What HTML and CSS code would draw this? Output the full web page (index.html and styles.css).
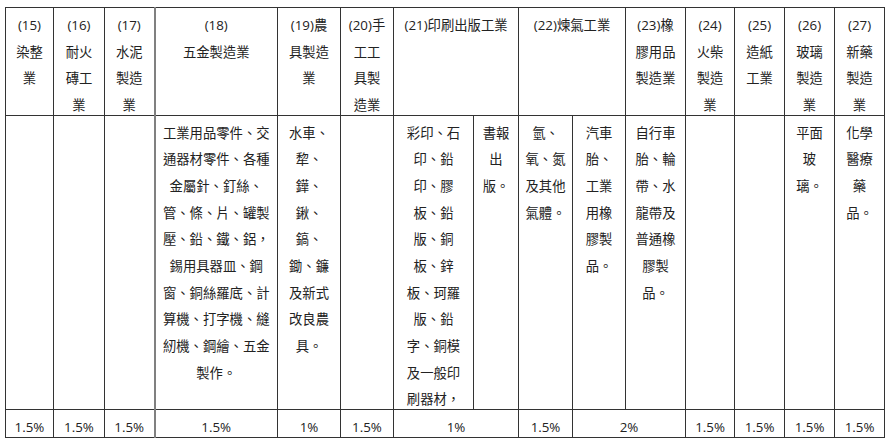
FILE: index.html
```html
<!DOCTYPE html>
<html lang="zh-Hant">
<head>
<meta charset="utf-8">
<link rel="stylesheet" href="styles.css">
</head>
<body>
<table class="rates">
  <colgroup>
    <col class="w48"><col class="w51"><col class="w50"><col class="w123"><col class="w63"><col class="w53"><col class="w80"><col class="w45"><col class="w54"><col class="w53"><col class="w60"><col class="w49"><col class="w50"><col class="w50"><col class="w50">
  </colgroup>
  <tr class="head">
    <td><div class="c">(15)<br>染整<br>業</div></td>
    <td><div class="c">(16)<br>耐火<br>磚工<br>業</div></td>
    <td><div class="c">(17)<br>水泥<br>製造<br>業</div></td>
    <td class="thick"><div class="c">(18)<br>五金製造業</div></td>
    <td><div class="c">(19)農<br>具製造<br>業</div></td>
    <td><div class="c">(20)手<br>工工<br>具製<br>造業</div></td>
    <td colspan="2"><div class="c">(21)印刷出版工業</div></td>
    <td colspan="2"><div class="c">(22)煉氣工業</div></td>
    <td><div class="c">(23)橡<br>膠用品<br>製造業</div></td>
    <td><div class="c">(24)<br>火柴<br>製造<br>業</div></td>
    <td><div class="c">(25)<br>造紙<br>工業</div></td>
    <td><div class="c">(26)<br>玻璃<br>製造<br>業</div></td>
    <td><div class="c">(27)<br>新藥<br>製造<br>業</div></td>
  </tr>
  <tr class="body">
    <td></td>
    <td></td>
    <td></td>
    <td class="thick"><div class="c">工業用品零件、交<br>通器材零件、各種<br>金屬針、釘絲、<br>管、條、片、罐製<br>壓、鉛、鐵、鋁，<br>錫用具器皿、鋼<br>窗、銅絲羅底、計<br>算機、打字機、縫<br>紉機、鋼繪、五金<br>製作。</div></td>
    <td><div class="c">水車、<br>犂、<br>鏵、<br>鍬、<br>鎬、<br>鋤、鐮<br>及新式<br>改良農<br>具。</div></td>
    <td></td>
    <td><div class="c">彩印、石<br>印、鉛<br>印、膠<br>板、鉛<br>版、銅<br>板、鋅<br>板、珂羅<br>版、鉛<br>字、銅模<br>及一般印<br>刷器材，</div></td>
    <td><div class="c">書報<br>出<br>版。</div></td>
    <td><div class="c">氫、<br>氧、氮<br>及其他<br>氣體。</div></td>
    <td><div class="c">汽車<br>胎、<br>工業<br>用橡<br>膠製<br>品。</div></td>
    <td><div class="c">自行車<br>胎、輪<br>帶、水<br>龍帶及<br>普通橡<br>膠製<br>品。</div></td>
    <td></td>
    <td></td>
    <td><div class="c">平面<br>玻<br>璃。</div></td>
    <td><div class="c">化學<br>醫療<br>藥<br>品。</div></td>
  </tr>
  <tr class="foot">
    <td><div class="c">1.5%</div></td>
    <td><div class="c">1.5%</div></td>
    <td><div class="c">1.5%</div></td>
    <td class="thick"><div class="c">1.5%</div></td>
    <td><div class="c">1%</div></td>
    <td><div class="c">1.5%</div></td>
    <td colspan="2"><div class="c">1%</div></td>
    <td><div class="c">1.5%</div></td>
    <td colspan="2"><div class="c">2%</div></td>
    <td><div class="c">1.5%</div></td>
    <td><div class="c">1.5%</div></td>
    <td><div class="c">1.5%</div></td>
    <td><div class="c">1.5%</div></td>
  </tr>
</table>
</body>
</html>
```
FILE: styles.css
```css
html, body {
  margin: 0;
  padding: 0;
  background: #ffffff;
}

body {
  font-family: "Open Sans", "Noto Sans CJK JP", "Noto Sans CJK TC", sans-serif;
  font-size: 13.33px;
  line-height: 26.67px;
  color: #222222;
}

.rates {
  border-collapse: collapse;
  table-layout: fixed;
  width: 879px;
  margin: 7px 0 0 5px;
  border: 1px solid #333333;
}

.rates td {
  border: 1px solid #333333;
  padding: 0 1px;
  vertical-align: top;
  text-align: center;
  white-space: nowrap;
  overflow: hidden;
}

.rates td.thick {
  border-left: 2px solid #808080;
}

.c {
  padding-top: 4px;
  margin-bottom: -4px;
}

.w48 { width: 48px; }
.w51 { width: 51px; }
.w50 { width: 50px; }
.w123 { width: 123px; }
.w63 { width: 63px; }
.w53 { width: 53px; }
.w80 { width: 80px; }
.w45 { width: 45px; }
.w54 { width: 54px; }
.w60 { width: 60px; }
.w49 { width: 49px; }
```
